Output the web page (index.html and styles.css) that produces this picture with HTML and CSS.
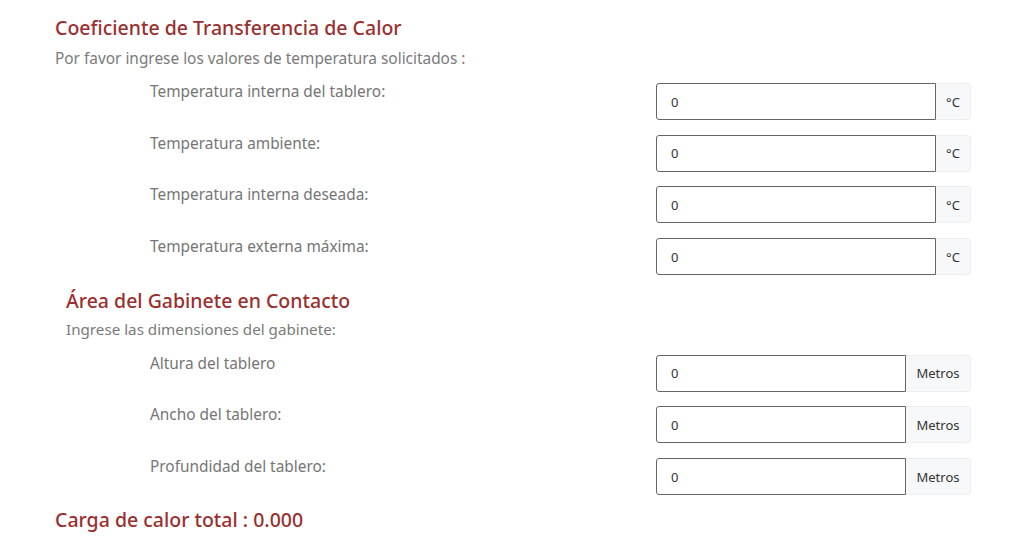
FILE: index.html
```html
<!DOCTYPE html>
<html lang="es">
<head>
  <meta charset="UTF-8">
  <meta name="viewport" content="width=device-width, initial-scale=1.0">
  <title>Carga de calor</title>
  <link rel="stylesheet" href="styles.css">
</head>
<body>
  <div class="container">
    <h2 class="title">Coeficiente de Transferencia de Calor</h2>
    <p class="subtitle">Por favor ingrese los valores de temperatura solicitados :</p>

    <div class="row">
      <label class="label">Temperatura interna del tablero:</label>
      <div class="input-group">
        <input type="text" value="0">
        <span class="addon">°C</span>
      </div>
    </div>
    <div class="row">
      <label class="label">Temperatura ambiente:</label>
      <div class="input-group">
        <input type="text" value="0">
        <span class="addon">°C</span>
      </div>
    </div>
    <div class="row">
      <label class="label">Temperatura interna deseada:</label>
      <div class="input-group">
        <input type="text" value="0">
        <span class="addon">°C</span>
      </div>
    </div>
    <div class="row">
      <label class="label">Temperatura externa máxima:</label>
      <div class="input-group">
        <input type="text" value="0">
        <span class="addon">°C</span>
      </div>
    </div>

    <div class="section">
      <h2 class="title">Área del Gabinete en Contacto</h2>
      <p class="subtitle">Ingrese las dimensiones del gabinete:</p>
    </div>

    <div class="row">
      <label class="label">Altura del tablero</label>
      <div class="input-group">
        <input type="text" value="0">
        <span class="addon wide">Metros</span>
      </div>
    </div>
    <div class="row">
      <label class="label">Ancho del tablero:</label>
      <div class="input-group">
        <input type="text" value="0">
        <span class="addon wide">Metros</span>
      </div>
    </div>
    <div class="row">
      <label class="label">Profundidad del tablero:</label>
      <div class="input-group">
        <input type="text" value="0">
        <span class="addon wide">Metros</span>
      </div>
    </div>

    <h2 class="title total">Carga de calor total : 0.000</h2>
  </div>
</body>
</html>
```

FILE: styles.css
```css
* {
  box-sizing: border-box;
  font-family: "Noto Sans", sans-serif;
}

body {
  margin: 0;
  background-color: white;
}

.container {
  padding: 15px 0 0 55px;
  width: 971px;
}

.title {
  color: #9b2f2f;
  font-size: 19.5px;
  font-weight: 500;
  margin: 0;
  line-height: 26px;
}

.subtitle {
  color: #7a7a7a;
  font-size: 15.4px;
  margin: 8px 0 14px 0;
  line-height: 20px;
}

.section {
  padding-left: 11px;
  margin-top: -2px;
}

.section .subtitle {
  font-size: 15.2px;
  margin-top: 5px;
  margin-bottom: 16px;
}

.row {
  display: flex;
  justify-content: space-between;
  align-items: flex-start;
  padding-left: 95px;
  margin-bottom: 13.7px;
}

.label {
  color: #757575;
  font-size: 15.4px;
  line-height: 20px;
  margin-top: -1px;
}

.input-group {
  display: flex;
  height: 37px;
  width: 315px;
  margin-bottom: 1px;
}

.input-group input {
  flex: 1;
  min-width: 0;
  height: 37px;
  border: 1px solid #666;
  border-radius: 3px 0 0 3px;
  padding: 0 14px;
  font-size: 13px;
  color: #333;
  outline: none;
}

.addon {
  width: 35px;
  height: 37px;
  background-color: #f7f8f9;
  border: 1px solid #eceef0;
  border-left: none;
  border-radius: 0 4px 4px 0;
  display: flex;
  align-items: center;
  justify-content: center;
  font-size: 13px;
  color: #333;
}

.addon.wide {
  width: 65px;
}

.total {
  margin-top: -3px;
}
```
